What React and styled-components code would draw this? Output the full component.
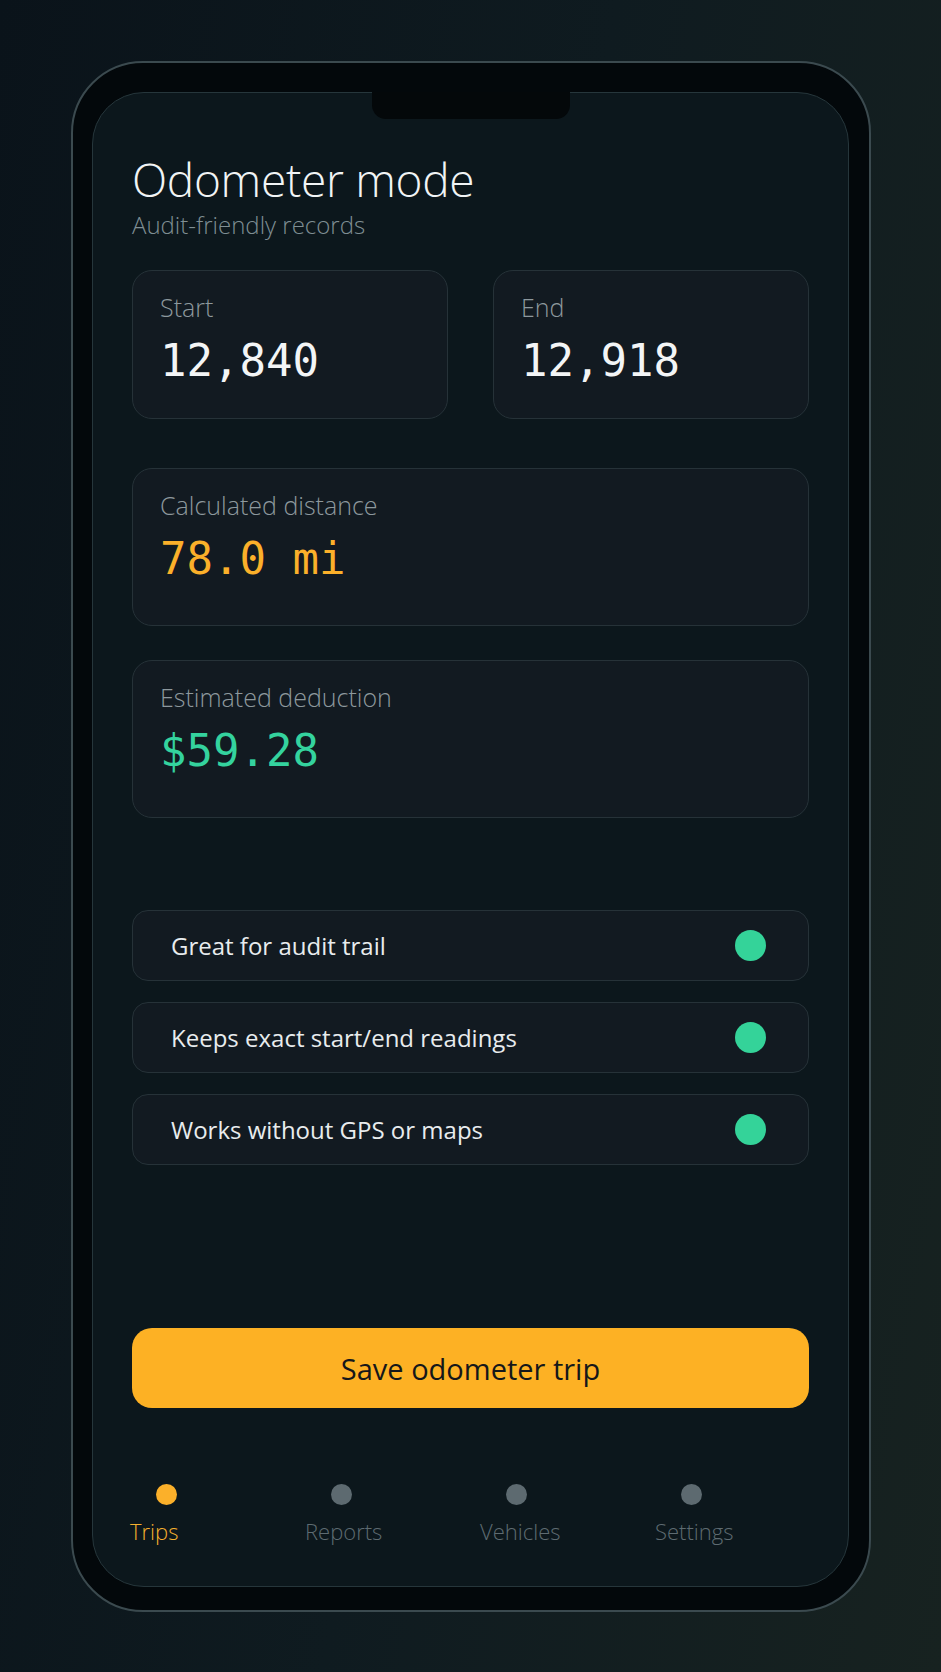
import React from 'react';
import styled, { createGlobalStyle } from 'styled-components';

const GlobalStyle = createGlobalStyle`
  html, body {
    margin: 0;
    padding: 0;
  }
  body {
    background: linear-gradient(100deg, #0a131a 0%, #0f1b20 50%, #172220 100%);
    font-family: "Open Sans", "Noto Sans", sans-serif;
    min-height: 1672px;
  }
  * { box-sizing: border-box; }
`;

const Page = styled.div`
  min-height: 1672px;
  display: flex;
  align-items: flex-start;
  justify-content: center;
  padding-top: 61px;
  padding-left: 1px;
`;

const Phone = styled.div`
  width: 800px;
  border: 2px solid #3b4a4f;
  border-radius: 72px;
  background: #03080b;
  padding: 29px 20px 23px 19px;
`;

const Screen = styled.div`
  position: relative;
  height: 1495px;
  border: 1px solid #26363b;
  border-radius: 52px;
  background: #0c171c;
  padding: 0 39px;
  display: flex;
  flex-direction: column;
`;

const Notch = styled.div`
  position: absolute;
  top: -1px;
  left: 50%;
  transform: translateX(-50%);
  width: 198px;
  height: 27px;
  border-radius: 0 0 14px 14px;
  background: #04080a;
`;

const Header = styled.header`
  padding-top: 59px;
`;

const Title = styled.h1`
  margin: 0;
  font-size: 46px;
  font-weight: 300;
  line-height: 1.2;
  color: #f1f4f5;
  letter-spacing: -0.3px;
`;

const Subtitle = styled.p`
  margin: 2px 0 0;
  font-size: 24px;
  font-weight: 300;
  line-height: 1.3;
  color: #7f8e93;
`;

const ReadingGrid = styled.div`
  margin-top: 30px;
  display: grid;
  grid-template-columns: 1fr 1fr;
  gap: 45px;
`;

const Card = styled.div`
  height: ${p => p.$tall ? 158 : 149}px;
  border: 1px solid #263238;
  border-radius: 20px;
  background: #121a21;
  padding: 20px 27px;
`;

const CardLabel = styled.div`
  font-size: 25px;
  font-weight: 300;
  line-height: 1.3;
  color: #8d989d;
`;

const CardValue = styled.div`
  margin-top: 11px;
  font-family: "DejaVu Sans Mono", "Liberation Mono", monospace;
  font-size: 44px;
  line-height: 1.2;
  color: ${p => p.$tone || '#f3f5f6'};
`;

const Stack = styled.div`
  margin-top: 49px;
  display: flex;
  flex-direction: column;
  gap: 34px;
`;

const List = styled.ul`
  list-style: none;
  margin: 92px 0 0;
  padding: 0;
  display: flex;
  flex-direction: column;
  gap: 21px;
`;

const Row = styled.li`
  height: 71px;
  border: 1px solid #263238;
  border-radius: 16px;
  background: #121a21;
  padding: 0 42px 0 38px;
  display: flex;
  align-items: center;
  justify-content: space-between;
  font-size: 24px;
  font-weight: 400;
  color: #e8ecee;
`;

const Dot = styled.span`
  width: ${p => p.$size}px;
  height: ${p => p.$size}px;
  border-radius: 50%;
  background: ${p => p.$color};
  flex-shrink: 0;
`;

const SaveButton = styled.button`
  margin-top: auto;
  height: 80px;
  border: none;
  border-radius: 20px;
  background: #fdb124;
  color: #15171a;
  font-family: "Open Sans", "Noto Sans", sans-serif;
  font-size: 29px;
  font-weight: 400;
  cursor: pointer;
`;

const Nav = styled.nav`
  margin-top: 76px;
  margin-bottom: 40px;
  display: grid;
  grid-template-columns: repeat(4, 175px);
`;

const NavItem = styled.div`
  width: 70px;
  display: flex;
  flex-direction: column;
  gap: 12px;
`;

const NavDot = styled(Dot)`
  margin-left: 24px;
`;

const NavLabel = styled.span`
  margin-left: -2px;
  font-size: 22px;
  font-weight: 300;
  line-height: 1.3;
  white-space: nowrap;
  color: ${p => p.$active ? '#f4b02e' : '#5e6b71'};
`;

const perks = [
  'Great for audit trail',
  'Keeps exact start/end readings',
  'Works without GPS or maps',
];

const tabs = ['Trips', 'Reports', 'Vehicles', 'Settings'];

export default function App() {
  return (
    <>
      <GlobalStyle />
      <Page>
        <Phone>
          <Screen>
            <Notch />
            <Header>
              <Title>Odometer mode</Title>
              <Subtitle>Audit-friendly records</Subtitle>
            </Header>

            <ReadingGrid>
              <Card>
                <CardLabel>Start</CardLabel>
                <CardValue>12,840</CardValue>
              </Card>
              <Card>
                <CardLabel>End</CardLabel>
                <CardValue>12,918</CardValue>
              </Card>
            </ReadingGrid>

            <Stack>
              <Card $tall>
                <CardLabel>Calculated distance</CardLabel>
                <CardValue $tone="#fbb02a">78.0 mi</CardValue>
              </Card>
              <Card $tall>
                <CardLabel>Estimated deduction</CardLabel>
                <CardValue $tone="#34d39e">$59.28</CardValue>
              </Card>
            </Stack>

            <List>
              {perks.map(p => (
                <Row key={p}>
                  {p}
                  <Dot $size={31} $color="#34d399" />
                </Row>
              ))}
            </List>

            <SaveButton>Save odometer trip</SaveButton>

            <Nav>
              {tabs.map((t, i) => (
                <NavItem key={t}>
                  <NavDot $size={21} $color={i === 0 ? '#fbb02a' : '#5d6a70'} />
                  <NavLabel $active={i === 0}>{t}</NavLabel>
                </NavItem>
              ))}
            </Nav>
          </Screen>
        </Phone>
      </Page>
    </>
  );
}
